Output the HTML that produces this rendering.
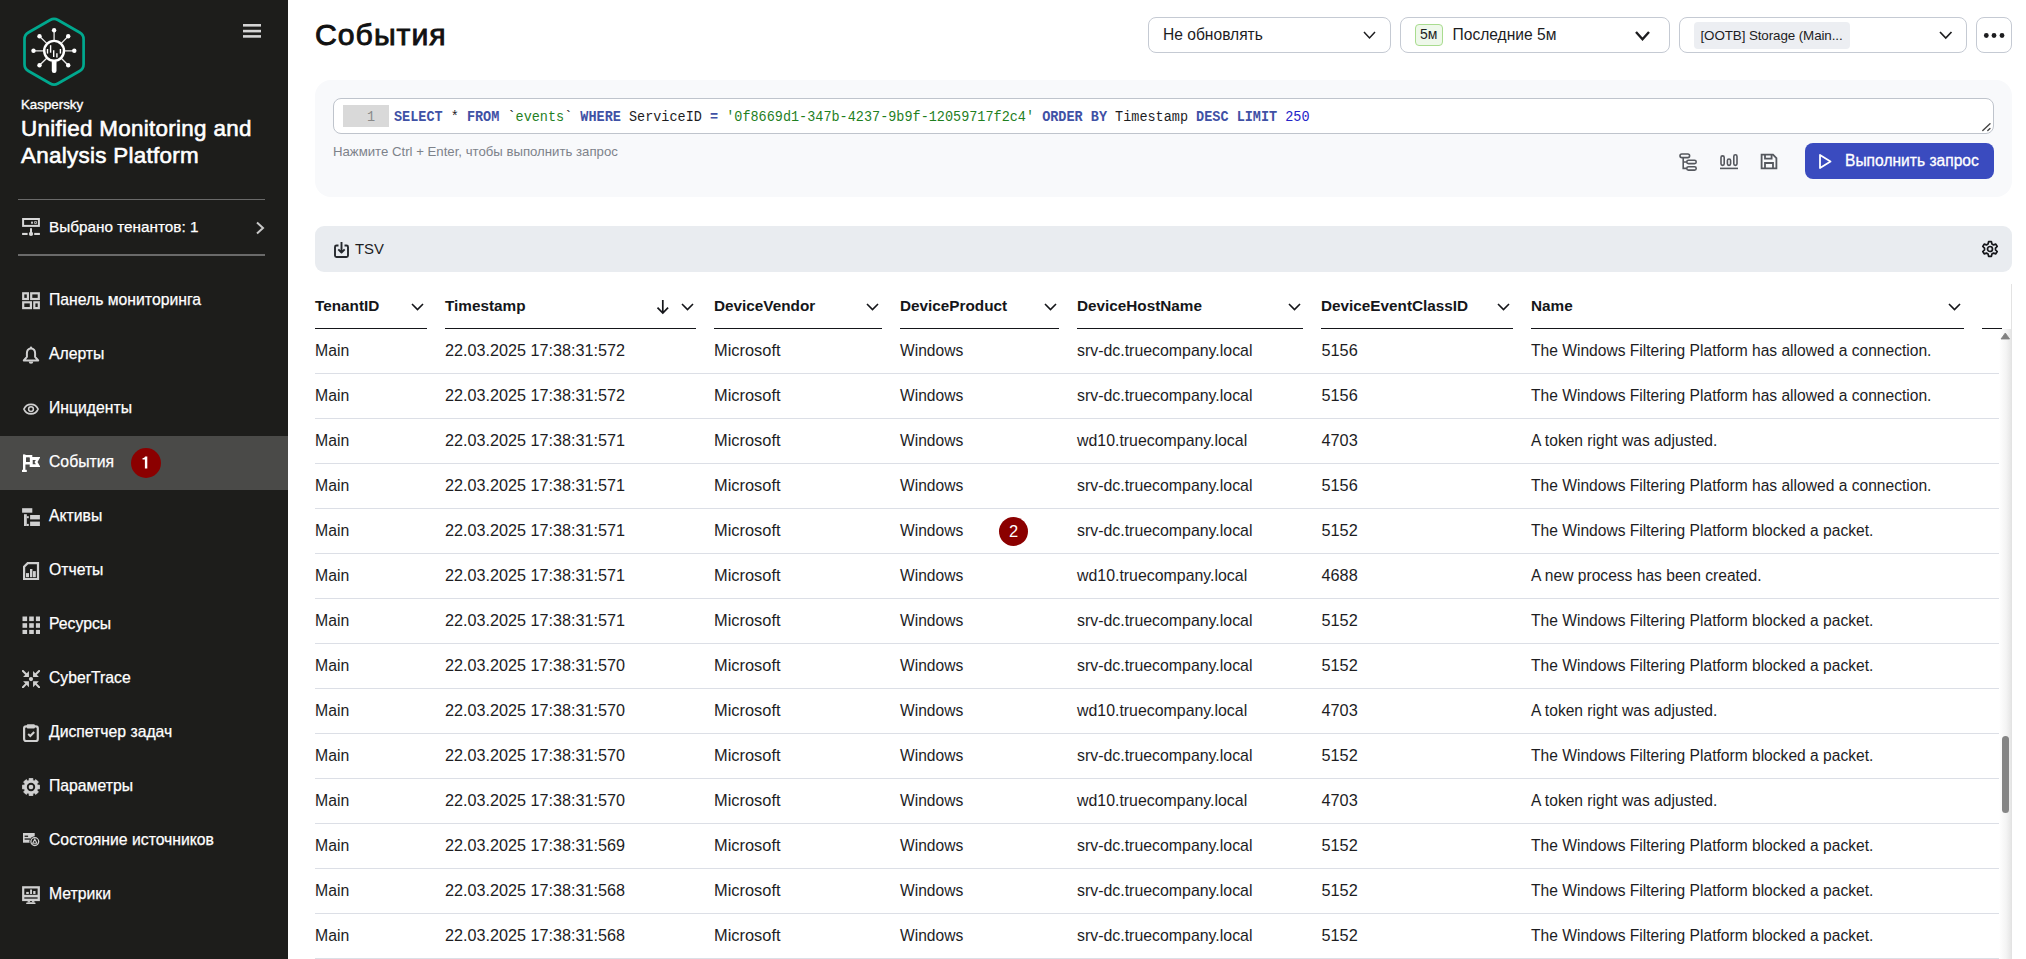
<!DOCTYPE html>
<html><head><meta charset="utf-8">
<style>
*{box-sizing:border-box;margin:0;padding:0}
html,body{width:2026px;height:959px;overflow:hidden;background:#fff;font-family:"Liberation Sans",sans-serif;color:#1d1d1f}
.abs{position:absolute}
#side{position:absolute;left:0;top:0;width:288px;height:959px;background:#1d1d1b;color:#fff}
.nav{position:absolute;left:0;width:288px;height:54px}
.nav.sel{background:#4a4a48}
.nav svg{position:absolute;left:21px;top:18px}
.nav .t{position:absolute;left:49px;top:0;line-height:54px;font-size:15.6px;white-space:nowrap;color:#fff}
.badge{position:absolute;width:30px;height:30px;border-radius:50%;background:#8b0000;color:#fff;font-size:16px;line-height:30px;text-align:center;font-weight:bold}
.dd{position:absolute;top:17px;height:36px;border:1px solid #c5cad3;border-radius:8px;background:#fff}
.hdr{position:absolute;top:290px;height:39px;border-bottom:1px solid #15161a}
.hdr .t{position:absolute;left:0;top:0;font-weight:bold;font-size:15.3px;line-height:30px;white-space:nowrap}
.hdr svg{position:absolute;top:13px}
.row{position:absolute;left:315px;width:1684px;height:45px;border-bottom:1px solid #dcdfe6}
.row span{position:absolute;top:0;line-height:44px;font-size:16px;white-space:nowrap;color:#1d1d1f}
.mono{font-family:"Liberation Mono",monospace}
</style></head><body>
<div id="side">
<svg class="abs" style="left:0;top:0" width="110" height="90" viewBox="0 0 110 90">
<path d="M50.15 19.99 Q54.05 17.75 57.95 19.99 L79.70 32.51 Q83.6 34.75 83.60 39.25 L83.60 64.25 Q83.6 68.75 79.70 70.99 L57.95 83.51 Q54.05 85.75 50.15 83.51 L28.40 70.99 Q24.5 68.75 24.50 64.25 L24.50 39.25 Q24.5 34.75 28.40 32.51 Z" fill="none" stroke="#00a88e" stroke-width="2.7"/>
<g stroke="#e8e8e8" stroke-width="1.3" stroke-linecap="round">
<line x1="54.1" y1="30.2" x2="54.1" y2="41"/>
<line x1="39.5" y1="36.3" x2="47" y2="43.6"/>
<line x1="68.2" y1="36.3" x2="61" y2="43.6"/>
<line x1="33.5" y1="50.8" x2="44.3" y2="50.8"/>
<line x1="74.3" y1="50.8" x2="64" y2="50.8"/>
<line x1="39.5" y1="65.3" x2="47" y2="58"/>
<line x1="68.2" y1="65.3" x2="61" y2="58"/>
</g>
<g fill="#fff">
<circle cx="54.1" cy="30.2" r="2.2"/><circle cx="39.5" cy="36.3" r="2.2"/><circle cx="68.2" cy="36.3" r="2.2"/>
<circle cx="33.5" cy="50.8" r="2.2"/><circle cx="74.3" cy="50.8" r="2.2"/><circle cx="39.5" cy="65.3" r="2.2"/><circle cx="68.2" cy="65.3" r="2.2"/>
<rect x="51.8" y="60" width="4.7" height="12.9" rx="2.2"/>
</g>
<circle cx="54.1" cy="50.8" r="9.9" fill="#1d1d1b" stroke="#fff" stroke-width="2.4"/>
<g stroke="#fff" stroke-width="1.4">
<line x1="47.5" y1="49" x2="47.5" y2="53.6"/><line x1="50.6" y1="45.2" x2="50.6" y2="52.7"/>
<line x1="53.7" y1="50.3" x2="53.7" y2="56.9"/><line x1="56.9" y1="53.2" x2="56.9" y2="57.4"/>
<line x1="60.4" y1="49" x2="60.4" y2="53.6"/>
</g>
</svg>
<svg class="abs" style="left:243px;top:22px" width="18" height="18"><g fill="#d4d4d4"><rect x="0" y="2" width="18" height="2.6"/><rect x="0" y="7.8" width="18" height="2.6"/><rect x="0" y="13.1" width="18" height="2.6"/></g></svg>
<div class="abs" style="left:21px;top:96.98px;font-size:13.3px;line-height:16.62px;font-weight:normal;white-space:nowrap;color:#fff;-webkit-text-stroke:0.35px #fff;">Kaspersky</div>
<div class="abs" style="left:21px;top:115.14px;font-size:22.4px;line-height:28.0px;font-weight:normal;white-space:nowrap;color:#fff;-webkit-text-stroke:0.6px #fff;letter-spacing:0.3px;">Unified Monitoring and</div>
<div class="abs" style="left:21px;top:142.04px;font-size:22.4px;line-height:28.0px;font-weight:normal;white-space:nowrap;color:#fff;-webkit-text-stroke:0.6px #fff;letter-spacing:0.3px;">Analysis Platform</div>
<div class="abs" style="left:18px;top:199px;width:247px;height:1px;background:#6a6a6a"></div>
<div class="abs" style="left:18px;top:254px;width:247px;height:2px;background:#6a6a6a"></div>
<svg class="abs" style="left:22px;top:218px" width="18" height="18" viewBox="0 0 18 18">
<rect x="1.1" y="1" width="15.8" height="6.9" fill="none" stroke="#d8d8d8" stroke-width="2"/>
<rect x="9.1" y="3.6" width="1.8" height="2.1" fill="#d8d8d8"/>
<rect x="12.1" y="3.2" width="2.9" height="2.9" fill="#bdbdbd"/>
<path d="M12.6 3.7 L14.5 5.6 M14.5 3.7 L12.6 5.6" stroke="#1d1d1b" stroke-width="0.6"/>
<rect x="8" y="10.2" width="2" height="5" fill="#d8d8d8"/>
<circle cx="9" cy="15.9" r="2.1" fill="#d8d8d8"/>
<rect x="0.1" y="14.9" width="5.5" height="2.1" fill="#d8d8d8"/><rect x="12.2" y="14.9" width="5.7" height="2.1" fill="#d8d8d8"/>
</svg>
<div class="abs" style="left:49px;top:216.84px;font-size:15.3px;line-height:19.12px;font-weight:normal;white-space:nowrap;color:#fff;-webkit-text-stroke:0.25px #fff;">Выбрано тенантов: 1</div>
<svg class="abs" style="left:254px;top:220px" width="12" height="16"><path d="M3 2.5 L9 8 L3 13.5" fill="none" stroke="#c8c8c8" stroke-width="2"/></svg>
<div class="nav" style="top:274px"><svg width="18" height="18" viewBox="0 0 18 18" style="left:22px;top:17.8px"><g fill="none" stroke="#d0d0d0" stroke-width="2.2"><rect x="1.2" y="1.3" width="4.7" height="5.7"/><rect x="9.2" y="1.3" width="7.6" height="5.7"/><rect x="1.2" y="10.3" width="7.7" height="5.8"/><rect x="12.3" y="10.3" width="4.5" height="5.8"/></g></svg></div>
<div class="abs" style="left:49px;top:290.00px;font-size:15.75px;line-height:19.69px;font-weight:normal;white-space:nowrap;color:#fff;-webkit-text-stroke:0.25px #fff;">Панель мониторинга</div>
<div class="nav" style="top:328px"><svg width="18" height="18" viewBox="0 0 18 18" style="left:22px;top:17.8px"><path d="M9 2.4 C6.1 2.4 4.9 4.6 4.9 7.2 L4.9 10.9 L1.8 14.5 L16.2 14.5 L13.1 10.9 L13.1 7.2 C13.1 4.6 11.9 2.4 9 2.4 Z" fill="none" stroke="#d0d0d0" stroke-width="2" stroke-linejoin="round"/><circle cx="9" cy="1.7" r="1.2" fill="#d0d0d0"/><path d="M6.7 15.4 A2.3 2.3 0 0 0 11.3 15.4 Z" fill="#d0d0d0"/></svg></div>
<div class="abs" style="left:49px;top:344.00px;font-size:15.75px;line-height:19.69px;font-weight:normal;white-space:nowrap;color:#fff;-webkit-text-stroke:0.25px #fff;">Алерты</div>
<div class="nav" style="top:382px"><svg width="18" height="18" viewBox="0 0 18 18" style="left:22px;top:17.8px"><path d="M1.9 9.1 C4.6 2.8 13.4 2.8 16.1 9.1 C13.4 15.4 4.6 15.4 1.9 9.1 Z" fill="none" stroke="#d0d0d0" stroke-width="1.6" stroke-linejoin="round"/><circle cx="9" cy="9.1" r="2.4" fill="none" stroke="#d0d0d0" stroke-width="1.5"/></svg></div>
<div class="abs" style="left:49px;top:398.00px;font-size:15.75px;line-height:19.69px;font-weight:normal;white-space:nowrap;color:#fff;-webkit-text-stroke:0.25px #fff;">Инциденты</div>
<div class="nav sel" style="top:436px"><svg width="18" height="18" viewBox="0 0 18 18" style="left:22px;top:17.8px"><rect x="1" y="0.4" width="2.4" height="17" fill="#fff"/><rect x="0" y="15.8" width="4.8" height="2.4" fill="#fff"/><path fill-rule="evenodd" d="M3 0.9 H10.3 V10.5 H3 Z M4.1 3.6 H7.7 V8.0 H4.1 Z" fill="#fff"/><path fill-rule="evenodd" d="M7.7 3.0 H18.4 L15.5 8.1 L18.4 13.0 H7.7 Z M10.6 6.0 H13.9 L12.5 8.1 L13.9 10.3 H10.6 Z" fill="#fff"/><rect x="4.1" y="3.6" width="3.6" height="4.4" fill="#4a4a48"/></svg></div>
<div class="abs" style="left:49px;top:452.00px;font-size:15.75px;line-height:19.69px;font-weight:normal;white-space:nowrap;color:#fff;-webkit-text-stroke:0.25px #fff;">События</div>
<div class="nav" style="top:490px"><svg width="18" height="18" viewBox="0 0 18 18" style="left:22px;top:17.8px"><rect x="0.1" y="0.2" width="10.2" height="4.5" fill="#d0d0d0"/><rect x="2" y="6.2" width="2.8" height="12" fill="#d0d0d0"/><rect x="4.8" y="8.2" width="2" height="2" fill="#d0d0d0"/><rect x="4.8" y="15.9" width="2" height="2.3" fill="#d0d0d0"/><rect x="8.1" y="7" width="9.8" height="4.4" fill="#d0d0d0"/><rect x="8.1" y="13.6" width="9.8" height="4.6" fill="#d0d0d0"/></svg></div>
<div class="abs" style="left:49px;top:506.00px;font-size:15.75px;line-height:19.69px;font-weight:normal;white-space:nowrap;color:#fff;-webkit-text-stroke:0.25px #fff;">Активы</div>
<div class="nav" style="top:544px"><svg width="18" height="18" viewBox="0 0 18 18" style="left:22px;top:17.8px"><path d="M5.7 1.2 L16 1.2 L16 17.1 L2.1 17.1 L2.1 4.8 Z" fill="none" stroke="#d0d0d0" stroke-width="2.2" stroke-linejoin="miter"/><rect x="4" y="11.1" width="3" height="4.1" fill="#d0d0d0"/><rect x="8" y="7" width="2.4" height="8.2" fill="#d0d0d0"/><rect x="11" y="9.1" width="2.8" height="6.1" fill="#d0d0d0"/></svg></div>
<div class="abs" style="left:49px;top:560.00px;font-size:15.75px;line-height:19.69px;font-weight:normal;white-space:nowrap;color:#fff;-webkit-text-stroke:0.25px #fff;">Отчеты</div>
<div class="nav" style="top:598px"><svg width="18" height="18" viewBox="0 0 18 18" style="left:22px;top:17.8px"><rect x="0.5" y="0.5" width="4.6" height="4.6" fill="#d0d0d0"/><rect x="0.5" y="7.2" width="4.6" height="4.6" fill="#d0d0d0"/><rect x="0.5" y="13.9" width="4.6" height="4.6" fill="#d0d0d0"/><rect x="7.2" y="0.5" width="4.6" height="4.6" fill="#d0d0d0"/><rect x="7.2" y="7.2" width="4.6" height="4.6" fill="#d0d0d0"/><rect x="7.2" y="13.9" width="4.6" height="4.6" fill="#d0d0d0"/><rect x="13.9" y="0.5" width="4.6" height="4.6" fill="#d0d0d0"/><rect x="13.9" y="7.2" width="4.6" height="4.6" fill="#d0d0d0"/><rect x="13.9" y="13.9" width="4.6" height="4.6" fill="#d0d0d0"/></svg></div>
<div class="abs" style="left:49px;top:614.00px;font-size:15.75px;line-height:19.69px;font-weight:normal;white-space:nowrap;color:#fff;-webkit-text-stroke:0.25px #fff;">Ресурсы</div>
<div class="nav" style="top:652px"><svg width="18" height="18" viewBox="0 0 18 18" style="left:22px;top:17.8px"><path d="M1.10 7.05 L6.95 7.05 L6.95 1.06 Z" fill="#d0d0d0"/><path d="M0.90 1.00 L5.20 5.30" stroke="#d0d0d0" stroke-width="2" stroke-linecap="round"/><path d="M16.90 7.05 L11.05 7.05 L11.05 1.06 Z" fill="#d0d0d0"/><path d="M17.10 1.00 L12.80 5.30" stroke="#d0d0d0" stroke-width="2" stroke-linecap="round"/><path d="M1.10 11.15 L6.95 11.15 L6.95 17.14 Z" fill="#d0d0d0"/><path d="M0.90 17.20 L5.20 12.90" stroke="#d0d0d0" stroke-width="2" stroke-linecap="round"/><path d="M16.90 11.15 L11.05 11.15 L11.05 17.14 Z" fill="#d0d0d0"/><path d="M17.10 17.20 L12.80 12.90" stroke="#d0d0d0" stroke-width="2" stroke-linecap="round"/><circle cx="9" cy="9.1" r="2.1" fill="#d0d0d0"/></svg></div>
<div class="abs" style="left:49px;top:668.00px;font-size:15.75px;line-height:19.69px;font-weight:normal;white-space:nowrap;color:#fff;-webkit-text-stroke:0.25px #fff;">CyberTrace</div>
<div class="nav" style="top:706px"><svg width="18" height="18" viewBox="0 0 18 18" style="left:22px;top:17.8px"><rect x="2.1" y="2.3" width="13.7" height="14.8" rx="2" fill="none" stroke="#d0d0d0" stroke-width="2.2"/><rect x="4.8" y="0.3" width="8.1" height="4.1" rx="1" fill="#d0d0d0"/><path d="M6.2 10 L8.3 12 L12.2 8" fill="none" stroke="#d0d0d0" stroke-width="2"/></svg></div>
<div class="abs" style="left:49px;top:722.00px;font-size:15.75px;line-height:19.69px;font-weight:normal;white-space:nowrap;color:#fff;-webkit-text-stroke:0.25px #fff;">Диспетчер задач</div>
<div class="nav" style="top:760px"><svg width="18" height="18" viewBox="0 0 18 18" style="left:22px;top:17.8px"><path d="M7.05 2.69 L7.23 0.28 L10.77 0.28 L10.95 2.69 L12.08 3.16 L13.92 1.58 L16.42 4.08 L14.84 5.92 L15.31 7.05 L17.72 7.23 L17.72 10.77 L15.31 10.95 L14.84 12.08 L16.42 13.92 L13.92 16.42 L12.08 14.84 L10.95 15.31 L10.77 17.72 L7.23 17.72 L7.05 15.31 L5.92 14.84 L4.08 16.42 L1.58 13.92 L3.16 12.08 L2.69 10.95 L0.28 10.77 L0.28 7.23 L2.69 7.05 L3.16 5.92 L1.58 4.08 L4.08 1.58 L5.92 3.16 Z" fill="#d0d0d0" stroke="#d0d0d0" stroke-width="0.8" stroke-linejoin="round"/><circle cx="9" cy="9" r="6.7" fill="#d0d0d0"/><circle cx="9" cy="9" r="4.2" fill="#1d1d1b"/><circle cx="9" cy="9" r="2.3" fill="#d0d0d0"/></svg></div>
<div class="abs" style="left:49px;top:776.00px;font-size:15.75px;line-height:19.69px;font-weight:normal;white-space:nowrap;color:#fff;-webkit-text-stroke:0.25px #fff;">Параметры</div>
<div class="nav" style="top:814px"><svg width="18" height="18" viewBox="0 0 18 18" style="left:22px;top:17.8px"><rect x="1" y="1" width="11.7" height="9.7" fill="#d0d0d0"/><rect x="2.6" y="3.6" width="3.5" height="1.3" fill="#1d1d1b"/><rect x="2.6" y="6.4" width="5.5" height="1.3" fill="#1d1d1b"/><circle cx="12.8" cy="9.6" r="5.4" fill="#1d1d1b"/><circle cx="12.8" cy="9.6" r="3.9" fill="none" stroke="#d0d0d0" stroke-width="1.3"/><path d="M12.8 7.2 L14.9 11.2 L10.7 11.2 Z" fill="none" stroke="#d0d0d0" stroke-width="1.1"/></svg></div>
<div class="abs" style="left:49px;top:830.00px;font-size:15.75px;line-height:19.69px;font-weight:normal;white-space:nowrap;color:#fff;-webkit-text-stroke:0.25px #fff;">Состояние источников</div>
<div class="nav" style="top:868px"><svg width="18" height="18" viewBox="0 0 18 18" style="left:22px;top:17.8px"><rect x="0.1" y="0.2" width="17.8" height="14.9" fill="#d0d0d0"/><rect x="2.3" y="2.5" width="13.3" height="6.3" fill="#1d1d1b"/><rect x="2.3" y="11.1" width="13.3" height="1.8" fill="#4a4a4a"/><rect x="4.2" y="5.9" width="2.6" height="2.1" fill="#d0d0d0"/><rect x="8.1" y="3.5" width="1.9" height="4.5" fill="#d0d0d0"/><rect x="11.2" y="5" width="2.3" height="3" fill="#d0d0d0"/><rect x="5.6" y="15.1" width="6.8" height="1.5" fill="#d0d0d0"/><rect x="8" y="15.1" width="2" height="0.9" fill="#1d1d1b"/><rect x="4.2" y="16.4" width="9.3" height="1.8" rx="0.6" fill="#d0d0d0"/></svg></div>
<div class="abs" style="left:49px;top:884.00px;font-size:15.75px;line-height:19.69px;font-weight:normal;white-space:nowrap;color:#fff;-webkit-text-stroke:0.25px #fff;">Метрики</div>
<div class="badge" style="left:130.6px;top:447.6px"><svg class="abs" style="left:0;top:0" width="30" height="30"><path d="M14.1 8.4 L16.3 8.4 L16.3 20.6 L13.9 20.6 L13.9 11.4 L11.5 11.4 L11.5 10.2 Q13.6 10.1 14.1 8.4 Z" fill="#fff"/></svg></div>
</div>
<div class="abs" style="left:315px;top:16.16px;font-size:30.2px;line-height:37.75px;font-weight:normal;white-space:nowrap;color:#111;-webkit-text-stroke:0.9px #111;letter-spacing:1px;">События</div>
<div class="dd" style="left:1148px;width:243px"></div>
<div class="abs" style="left:1163px;top:24.54px;font-size:15.6px;line-height:19.5px;font-weight:normal;white-space:nowrap;color:#1d1d1f;">Не обновлять</div>
<svg class="abs" style="left:1361.5px;top:30px" width="15" height="10"><path d="M2 2 L7.5 8 L13 2" fill="none" stroke="#1d1d1f" stroke-width="1.5"/></svg>
<div class="dd" style="left:1400px;width:270px"></div>
<div class="abs" style="left:1415px;top:24px;width:28px;height:22px;border:1px solid #a9dc8f;background:#eef8ea;border-radius:4px"></div>
<div class="abs" style="left:1420px;top:26.40px;font-size:14px;line-height:17.5px;font-weight:normal;white-space:nowrap;color:#1d1d1f;">5м</div>
<div class="abs" style="left:1452.5px;top:24.84px;font-size:15.6px;line-height:19.5px;font-weight:normal;white-space:nowrap;color:#1d1d1f;">Последние 5м</div>
<svg class="abs" style="left:1634px;top:30px" width="17" height="11.2"><path d="M2 2 L8.5 9.2 L15 2" fill="none" stroke="#1d1d1f" stroke-width="2.4"/></svg>
<div class="dd" style="left:1679px;width:288px"></div>
<div class="abs" style="left:1694px;top:22px;width:156px;height:27px;background:#eceef2;border-radius:4px"></div>
<div class="abs" style="left:1700.5px;top:27.58px;font-size:13.4px;line-height:16.75px;font-weight:normal;white-space:nowrap;color:#1d1d1f;letter-spacing:-0.1px;">[OOTB] Storage (Main...</div>
<svg class="abs" style="left:1937.5px;top:30px" width="15.5" height="10"><path d="M2 2 L7.75 8 L13.5 2" fill="none" stroke="#1d1d1f" stroke-width="1.7"/></svg>
<div class="dd" style="left:1976px;width:36px"></div>
<svg class="abs" style="left:1980px;top:30px" width="28" height="12"><g fill="#1d1d1f"><circle cx="6.3" cy="5.5" r="2.4"/><circle cx="14" cy="5.5" r="2.4"/><circle cx="22" cy="5.5" r="2.4"/></g></svg>
<div class="abs" style="left:315px;top:80px;width:1697px;height:117px;background:#f8f9fb;border-radius:16px"></div>
<div class="abs" style="left:333px;top:98px;width:1661px;height:36px;background:#fff;border:1px solid #bfc4cc;border-radius:8px"></div>
<div class="abs" style="left:343px;top:105px;width:46px;height:22px;background:#d9d9d9"></div>
<div class="abs" style="left:367px;top:109.88px;font-size:13.5px;line-height:16.88px;font-weight:normal;white-space:nowrap;color:#8a8a8a;font-family:'Liberation Mono',monospace;transform:scaleY(1.1);transform-origin:0 12px;">1</div>
<div class="abs" style="left:394px;top:109.88px;font-size:13.5px;line-height:16.88px;font-weight:normal;white-space:nowrap;color:#1d1d1f;font-family:'Liberation Mono',monospace;white-space:pre;transform:scaleY(1.1);transform-origin:0 12px;"><b style="color:#3f51a5">SELECT</b> * <b style="color:#3f51a5">FROM</b> `<span style="color:#1f7f1f">events</span>` <b style="color:#3f51a5">WHERE</b> ServiceID <b style="color:#3f51a5">=</b> <span style="color:#1f7f1f">'0f8669d1-347b-4237-9b9f-12059717f2c4'</span> <b style="color:#3f51a5">ORDER BY</b> Timestamp <b style="color:#3f51a5">DESC</b> <b style="color:#3f51a5">LIMIT</b> <span style="color:#2424c8">250</span></div>
<svg class="abs" style="left:1981px;top:121px" width="11" height="11"><path d="M1.8 9.6 L9 2.7 M6.8 9.6 L9 7.6" stroke="#444" stroke-width="1.4" stroke-linecap="round"/></svg>
<div class="abs" style="left:333px;top:143.68px;font-size:13.2px;line-height:16.5px;font-weight:normal;white-space:nowrap;color:#7d828a;">Нажмите Ctrl + Enter, чтобы выполнить запрос</div>
<svg class="abs" style="left:1678px;top:152px" width="20" height="20" viewBox="0 0 20 20"><g fill="none" stroke="#55585e" stroke-width="1.6">
<rect x="2" y="2" width="9.6" height="3.6" rx="1.8"/><rect x="8.8" y="8.3" width="9.4" height="3.3" rx="1.65"/><rect x="8.8" y="14.8" width="9.4" height="3.3" rx="1.65"/>
<path d="M5.2 5.6 L5.2 16.4 L8.8 16.4 M5.2 10 L8.8 10"/></g></svg>
<svg class="abs" style="left:1719px;top:152px" width="20" height="20" viewBox="0 0 20 20"><g fill="none" stroke="#55585e" stroke-width="1.6">
<rect x="2" y="3.9" width="3.2" height="9.5" rx="1.6"/><rect x="8.4" y="7" width="3.2" height="6.4" rx="1.6"/><rect x="14.8" y="2.8" width="3.2" height="10.6" rx="1.6"/>
<path d="M1 16.4 L19 16.4"/></g></svg>
<svg class="abs" style="left:1759px;top:152px" width="20" height="20" viewBox="0 0 20 20"><g fill="none" stroke="#55585e" stroke-width="1.8">
<path d="M2.6 2.6 L14 2.6 L17.4 6 L17.4 16.4 L2.6 16.4 Z"/><path d="M6 2.6 L6 6.6 L12.6 6.6 L12.6 2.6"/><path d="M6 16.4 L6 11 L14 11 L14 16.4"/></g></svg>
<div class="abs" style="left:1805px;top:143px;width:189px;height:36px;background:#3a4bbf;border-radius:8px"></div>
<svg class="abs" style="left:1817px;top:153px" width="16" height="17"><path d="M3 2 L13.5 8.5 L3 15 Z" fill="none" stroke="#fff" stroke-width="1.8" stroke-linejoin="round"/></svg>
<div class="abs" style="left:1845px;top:150.84px;font-size:15.6px;line-height:19.5px;font-weight:normal;white-space:nowrap;color:#fff;-webkit-text-stroke:0.3px #fff;">Выполнить запрос</div>
<div class="abs" style="left:315px;top:226px;width:1697px;height:46px;background:#e9ecf0;border-radius:9px"></div>
<svg class="abs" style="left:333px;top:241px" width="18" height="18" viewBox="0 0 18 18"><g fill="none" stroke="#25282d" stroke-width="1.9" stroke-linejoin="round">
<path d="M5.5 4.5 L3.5 4.5 Q2 4.5 2 6 L2 14.5 Q2 16 3.5 16 L13.5 16 Q15 16 15 14.5 L15 6 Q15 4.5 13.5 4.5 L11.5 4.5"/><path d="M8.5 1 L8.5 11.5 M5.3 8.3 L8.5 11.5 L11.7 8.3"/></g></svg>
<div class="abs" style="left:355px;top:240.33px;font-size:14.9px;line-height:18.62px;font-weight:normal;white-space:nowrap;color:#1d1d1f;">TSV</div>
<svg class="abs" style="left:1981px;top:240px" width="18" height="18" viewBox="0 0 18 18"><path d="M7.6 1.6 L10.4 1.6 L10.9 3.9 L12.6 4.9 L14.8 4.1 L16.2 6.5 L14.5 8.1 L14.5 9.9 L16.2 11.5 L14.8 13.9 L12.6 13.1 L10.9 14.1 L10.4 16.4 L7.6 16.4 L7.1 14.1 L5.4 13.1 L3.2 13.9 L1.8 11.5 L3.5 9.9 L3.5 8.1 L1.8 6.5 L3.2 4.1 L5.4 4.9 L7.1 3.9 Z" fill="none" stroke="#15161a" stroke-width="1.7" stroke-linejoin="round"/><circle cx="9" cy="9" r="2.5" fill="none" stroke="#15161a" stroke-width="1.7"/></svg>
<div class="abs" style="left:315px;top:295.84px;font-size:15.3px;line-height:19.12px;font-weight:bold;white-space:nowrap;color:#15161a;">TenantID</div>
<div class="abs" style="left:315px;top:328px;width:112px;height:1px;background:#15161a"></div>
<svg class="abs" style="left:411px;top:302px" width="14" height="10"><path d="M1 2 L6.5 7.6 L12 2" fill="none" stroke="#15161a" stroke-width="1.6"/></svg>
<div class="abs" style="left:445px;top:295.84px;font-size:15.3px;line-height:19.12px;font-weight:bold;white-space:nowrap;color:#15161a;">Timestamp</div>
<div class="abs" style="left:445px;top:328px;width:251px;height:1px;background:#15161a"></div>
<svg class="abs" style="left:680.5px;top:302px" width="14" height="10"><path d="M1 2 L6.5 7.6 L12 2" fill="none" stroke="#15161a" stroke-width="1.6"/></svg>
<div class="abs" style="left:714px;top:295.84px;font-size:15.3px;line-height:19.12px;font-weight:bold;white-space:nowrap;color:#15161a;">DeviceVendor</div>
<div class="abs" style="left:714px;top:328px;width:168px;height:1px;background:#15161a"></div>
<svg class="abs" style="left:866.3px;top:302px" width="14" height="10"><path d="M1 2 L6.5 7.6 L12 2" fill="none" stroke="#15161a" stroke-width="1.6"/></svg>
<div class="abs" style="left:900px;top:295.84px;font-size:15.3px;line-height:19.12px;font-weight:bold;white-space:nowrap;color:#15161a;">DeviceProduct</div>
<div class="abs" style="left:900px;top:328px;width:159px;height:1px;background:#15161a"></div>
<svg class="abs" style="left:1044px;top:302px" width="14" height="10"><path d="M1 2 L6.5 7.6 L12 2" fill="none" stroke="#15161a" stroke-width="1.6"/></svg>
<div class="abs" style="left:1077px;top:295.84px;font-size:15.3px;line-height:19.12px;font-weight:bold;white-space:nowrap;color:#15161a;">DeviceHostName</div>
<div class="abs" style="left:1077px;top:328px;width:226px;height:1px;background:#15161a"></div>
<svg class="abs" style="left:1287.6px;top:302px" width="14" height="10"><path d="M1 2 L6.5 7.6 L12 2" fill="none" stroke="#15161a" stroke-width="1.6"/></svg>
<div class="abs" style="left:1321px;top:295.84px;font-size:15.3px;line-height:19.12px;font-weight:bold;white-space:nowrap;color:#15161a;">DeviceEventClassID</div>
<div class="abs" style="left:1321px;top:328px;width:192px;height:1px;background:#15161a"></div>
<svg class="abs" style="left:1497.4px;top:302px" width="14" height="10"><path d="M1 2 L6.5 7.6 L12 2" fill="none" stroke="#15161a" stroke-width="1.6"/></svg>
<div class="abs" style="left:1531px;top:295.84px;font-size:15.3px;line-height:19.12px;font-weight:bold;white-space:nowrap;color:#15161a;">Name</div>
<div class="abs" style="left:1531px;top:328px;width:433px;height:1px;background:#15161a"></div>
<svg class="abs" style="left:1948px;top:302px" width="14" height="10"><path d="M1 2 L6.5 7.6 L12 2" fill="none" stroke="#15161a" stroke-width="1.6"/></svg>
<div class="abs" style="left:1982px;top:328px;width:20px;height:1px;background:#15161a"></div>
<svg class="abs" style="left:655px;top:299px" width="16" height="16"><path d="M7.8 1 L7.8 14 M2.5 8.6 L7.8 14 L13.1 8.6" fill="none" stroke="#15161a" stroke-width="1.7"/></svg>
<div class="abs" style="left:315px;top:373px;width:1684px;height:1px;background:#dcdfe6"></div>
<div class="abs" style="left:315px;top:340.65px;font-size:15.8px;line-height:19.75px;font-weight:normal;white-space:nowrap;">Main</div>
<div class="abs" style="left:445px;top:340.26px;font-size:16.2px;line-height:20.25px;font-weight:normal;white-space:nowrap;">22.03.2025 17:38:31:572</div>
<div class="abs" style="left:714px;top:340.07px;font-size:16.4px;line-height:20.5px;font-weight:normal;white-space:nowrap;">Microsoft</div>
<div class="abs" style="left:900px;top:340.84px;font-size:15.6px;line-height:19.5px;font-weight:normal;white-space:nowrap;">Windows</div>
<div class="abs" style="left:1077px;top:340.55px;font-size:15.9px;line-height:19.88px;font-weight:normal;white-space:nowrap;">srv-dc.truecompany.local</div>
<div class="abs" style="left:1321.5px;top:340.16px;font-size:16.3px;line-height:20.38px;font-weight:normal;white-space:nowrap;">5156</div>
<div class="abs" style="left:1531px;top:340.84px;font-size:15.6px;line-height:19.5px;font-weight:normal;white-space:nowrap;">The Windows Filtering Platform has allowed a connection.</div>
<div class="abs" style="left:315px;top:418px;width:1684px;height:1px;background:#dcdfe6"></div>
<div class="abs" style="left:315px;top:385.65px;font-size:15.8px;line-height:19.75px;font-weight:normal;white-space:nowrap;">Main</div>
<div class="abs" style="left:445px;top:385.26px;font-size:16.2px;line-height:20.25px;font-weight:normal;white-space:nowrap;">22.03.2025 17:38:31:572</div>
<div class="abs" style="left:714px;top:385.07px;font-size:16.4px;line-height:20.5px;font-weight:normal;white-space:nowrap;">Microsoft</div>
<div class="abs" style="left:900px;top:385.84px;font-size:15.6px;line-height:19.5px;font-weight:normal;white-space:nowrap;">Windows</div>
<div class="abs" style="left:1077px;top:385.55px;font-size:15.9px;line-height:19.88px;font-weight:normal;white-space:nowrap;">srv-dc.truecompany.local</div>
<div class="abs" style="left:1321.5px;top:385.16px;font-size:16.3px;line-height:20.38px;font-weight:normal;white-space:nowrap;">5156</div>
<div class="abs" style="left:1531px;top:385.84px;font-size:15.6px;line-height:19.5px;font-weight:normal;white-space:nowrap;">The Windows Filtering Platform has allowed a connection.</div>
<div class="abs" style="left:315px;top:463px;width:1684px;height:1px;background:#dcdfe6"></div>
<div class="abs" style="left:315px;top:430.65px;font-size:15.8px;line-height:19.75px;font-weight:normal;white-space:nowrap;">Main</div>
<div class="abs" style="left:445px;top:430.26px;font-size:16.2px;line-height:20.25px;font-weight:normal;white-space:nowrap;">22.03.2025 17:38:31:571</div>
<div class="abs" style="left:714px;top:430.07px;font-size:16.4px;line-height:20.5px;font-weight:normal;white-space:nowrap;">Microsoft</div>
<div class="abs" style="left:900px;top:430.84px;font-size:15.6px;line-height:19.5px;font-weight:normal;white-space:nowrap;">Windows</div>
<div class="abs" style="left:1077px;top:430.55px;font-size:15.9px;line-height:19.88px;font-weight:normal;white-space:nowrap;">wd10.truecompany.local</div>
<div class="abs" style="left:1321.5px;top:430.16px;font-size:16.3px;line-height:20.38px;font-weight:normal;white-space:nowrap;">4703</div>
<div class="abs" style="left:1531px;top:430.84px;font-size:15.6px;line-height:19.5px;font-weight:normal;white-space:nowrap;">A token right was adjusted.</div>
<div class="abs" style="left:315px;top:508px;width:1684px;height:1px;background:#dcdfe6"></div>
<div class="abs" style="left:315px;top:475.65px;font-size:15.8px;line-height:19.75px;font-weight:normal;white-space:nowrap;">Main</div>
<div class="abs" style="left:445px;top:475.26px;font-size:16.2px;line-height:20.25px;font-weight:normal;white-space:nowrap;">22.03.2025 17:38:31:571</div>
<div class="abs" style="left:714px;top:475.07px;font-size:16.4px;line-height:20.5px;font-weight:normal;white-space:nowrap;">Microsoft</div>
<div class="abs" style="left:900px;top:475.84px;font-size:15.6px;line-height:19.5px;font-weight:normal;white-space:nowrap;">Windows</div>
<div class="abs" style="left:1077px;top:475.55px;font-size:15.9px;line-height:19.88px;font-weight:normal;white-space:nowrap;">srv-dc.truecompany.local</div>
<div class="abs" style="left:1321.5px;top:475.16px;font-size:16.3px;line-height:20.38px;font-weight:normal;white-space:nowrap;">5156</div>
<div class="abs" style="left:1531px;top:475.84px;font-size:15.6px;line-height:19.5px;font-weight:normal;white-space:nowrap;">The Windows Filtering Platform has allowed a connection.</div>
<div class="abs" style="left:315px;top:553px;width:1684px;height:1px;background:#dcdfe6"></div>
<div class="abs" style="left:315px;top:520.65px;font-size:15.8px;line-height:19.75px;font-weight:normal;white-space:nowrap;">Main</div>
<div class="abs" style="left:445px;top:520.26px;font-size:16.2px;line-height:20.25px;font-weight:normal;white-space:nowrap;">22.03.2025 17:38:31:571</div>
<div class="abs" style="left:714px;top:520.07px;font-size:16.4px;line-height:20.5px;font-weight:normal;white-space:nowrap;">Microsoft</div>
<div class="abs" style="left:900px;top:520.84px;font-size:15.6px;line-height:19.5px;font-weight:normal;white-space:nowrap;">Windows</div>
<div class="abs" style="left:1077px;top:520.55px;font-size:15.9px;line-height:19.88px;font-weight:normal;white-space:nowrap;">srv-dc.truecompany.local</div>
<div class="abs" style="left:1321.5px;top:520.16px;font-size:16.3px;line-height:20.38px;font-weight:normal;white-space:nowrap;">5152</div>
<div class="abs" style="left:1531px;top:520.84px;font-size:15.6px;line-height:19.5px;font-weight:normal;white-space:nowrap;">The Windows Filtering Platform blocked a packet.</div>
<div class="abs" style="left:315px;top:598px;width:1684px;height:1px;background:#dcdfe6"></div>
<div class="abs" style="left:315px;top:565.65px;font-size:15.8px;line-height:19.75px;font-weight:normal;white-space:nowrap;">Main</div>
<div class="abs" style="left:445px;top:565.26px;font-size:16.2px;line-height:20.25px;font-weight:normal;white-space:nowrap;">22.03.2025 17:38:31:571</div>
<div class="abs" style="left:714px;top:565.07px;font-size:16.4px;line-height:20.5px;font-weight:normal;white-space:nowrap;">Microsoft</div>
<div class="abs" style="left:900px;top:565.84px;font-size:15.6px;line-height:19.5px;font-weight:normal;white-space:nowrap;">Windows</div>
<div class="abs" style="left:1077px;top:565.55px;font-size:15.9px;line-height:19.88px;font-weight:normal;white-space:nowrap;">wd10.truecompany.local</div>
<div class="abs" style="left:1321.5px;top:565.16px;font-size:16.3px;line-height:20.38px;font-weight:normal;white-space:nowrap;">4688</div>
<div class="abs" style="left:1531px;top:565.84px;font-size:15.6px;line-height:19.5px;font-weight:normal;white-space:nowrap;">A new process has been created.</div>
<div class="abs" style="left:315px;top:643px;width:1684px;height:1px;background:#dcdfe6"></div>
<div class="abs" style="left:315px;top:610.65px;font-size:15.8px;line-height:19.75px;font-weight:normal;white-space:nowrap;">Main</div>
<div class="abs" style="left:445px;top:610.26px;font-size:16.2px;line-height:20.25px;font-weight:normal;white-space:nowrap;">22.03.2025 17:38:31:571</div>
<div class="abs" style="left:714px;top:610.07px;font-size:16.4px;line-height:20.5px;font-weight:normal;white-space:nowrap;">Microsoft</div>
<div class="abs" style="left:900px;top:610.84px;font-size:15.6px;line-height:19.5px;font-weight:normal;white-space:nowrap;">Windows</div>
<div class="abs" style="left:1077px;top:610.55px;font-size:15.9px;line-height:19.88px;font-weight:normal;white-space:nowrap;">srv-dc.truecompany.local</div>
<div class="abs" style="left:1321.5px;top:610.16px;font-size:16.3px;line-height:20.38px;font-weight:normal;white-space:nowrap;">5152</div>
<div class="abs" style="left:1531px;top:610.84px;font-size:15.6px;line-height:19.5px;font-weight:normal;white-space:nowrap;">The Windows Filtering Platform blocked a packet.</div>
<div class="abs" style="left:315px;top:688px;width:1684px;height:1px;background:#dcdfe6"></div>
<div class="abs" style="left:315px;top:655.65px;font-size:15.8px;line-height:19.75px;font-weight:normal;white-space:nowrap;">Main</div>
<div class="abs" style="left:445px;top:655.26px;font-size:16.2px;line-height:20.25px;font-weight:normal;white-space:nowrap;">22.03.2025 17:38:31:570</div>
<div class="abs" style="left:714px;top:655.07px;font-size:16.4px;line-height:20.5px;font-weight:normal;white-space:nowrap;">Microsoft</div>
<div class="abs" style="left:900px;top:655.84px;font-size:15.6px;line-height:19.5px;font-weight:normal;white-space:nowrap;">Windows</div>
<div class="abs" style="left:1077px;top:655.55px;font-size:15.9px;line-height:19.88px;font-weight:normal;white-space:nowrap;">srv-dc.truecompany.local</div>
<div class="abs" style="left:1321.5px;top:655.16px;font-size:16.3px;line-height:20.38px;font-weight:normal;white-space:nowrap;">5152</div>
<div class="abs" style="left:1531px;top:655.84px;font-size:15.6px;line-height:19.5px;font-weight:normal;white-space:nowrap;">The Windows Filtering Platform blocked a packet.</div>
<div class="abs" style="left:315px;top:733px;width:1684px;height:1px;background:#dcdfe6"></div>
<div class="abs" style="left:315px;top:700.65px;font-size:15.8px;line-height:19.75px;font-weight:normal;white-space:nowrap;">Main</div>
<div class="abs" style="left:445px;top:700.26px;font-size:16.2px;line-height:20.25px;font-weight:normal;white-space:nowrap;">22.03.2025 17:38:31:570</div>
<div class="abs" style="left:714px;top:700.07px;font-size:16.4px;line-height:20.5px;font-weight:normal;white-space:nowrap;">Microsoft</div>
<div class="abs" style="left:900px;top:700.84px;font-size:15.6px;line-height:19.5px;font-weight:normal;white-space:nowrap;">Windows</div>
<div class="abs" style="left:1077px;top:700.55px;font-size:15.9px;line-height:19.88px;font-weight:normal;white-space:nowrap;">wd10.truecompany.local</div>
<div class="abs" style="left:1321.5px;top:700.16px;font-size:16.3px;line-height:20.38px;font-weight:normal;white-space:nowrap;">4703</div>
<div class="abs" style="left:1531px;top:700.84px;font-size:15.6px;line-height:19.5px;font-weight:normal;white-space:nowrap;">A token right was adjusted.</div>
<div class="abs" style="left:315px;top:778px;width:1684px;height:1px;background:#dcdfe6"></div>
<div class="abs" style="left:315px;top:745.65px;font-size:15.8px;line-height:19.75px;font-weight:normal;white-space:nowrap;">Main</div>
<div class="abs" style="left:445px;top:745.26px;font-size:16.2px;line-height:20.25px;font-weight:normal;white-space:nowrap;">22.03.2025 17:38:31:570</div>
<div class="abs" style="left:714px;top:745.07px;font-size:16.4px;line-height:20.5px;font-weight:normal;white-space:nowrap;">Microsoft</div>
<div class="abs" style="left:900px;top:745.84px;font-size:15.6px;line-height:19.5px;font-weight:normal;white-space:nowrap;">Windows</div>
<div class="abs" style="left:1077px;top:745.55px;font-size:15.9px;line-height:19.88px;font-weight:normal;white-space:nowrap;">srv-dc.truecompany.local</div>
<div class="abs" style="left:1321.5px;top:745.16px;font-size:16.3px;line-height:20.38px;font-weight:normal;white-space:nowrap;">5152</div>
<div class="abs" style="left:1531px;top:745.84px;font-size:15.6px;line-height:19.5px;font-weight:normal;white-space:nowrap;">The Windows Filtering Platform blocked a packet.</div>
<div class="abs" style="left:315px;top:823px;width:1684px;height:1px;background:#dcdfe6"></div>
<div class="abs" style="left:315px;top:790.65px;font-size:15.8px;line-height:19.75px;font-weight:normal;white-space:nowrap;">Main</div>
<div class="abs" style="left:445px;top:790.26px;font-size:16.2px;line-height:20.25px;font-weight:normal;white-space:nowrap;">22.03.2025 17:38:31:570</div>
<div class="abs" style="left:714px;top:790.07px;font-size:16.4px;line-height:20.5px;font-weight:normal;white-space:nowrap;">Microsoft</div>
<div class="abs" style="left:900px;top:790.84px;font-size:15.6px;line-height:19.5px;font-weight:normal;white-space:nowrap;">Windows</div>
<div class="abs" style="left:1077px;top:790.55px;font-size:15.9px;line-height:19.88px;font-weight:normal;white-space:nowrap;">wd10.truecompany.local</div>
<div class="abs" style="left:1321.5px;top:790.16px;font-size:16.3px;line-height:20.38px;font-weight:normal;white-space:nowrap;">4703</div>
<div class="abs" style="left:1531px;top:790.84px;font-size:15.6px;line-height:19.5px;font-weight:normal;white-space:nowrap;">A token right was adjusted.</div>
<div class="abs" style="left:315px;top:868px;width:1684px;height:1px;background:#dcdfe6"></div>
<div class="abs" style="left:315px;top:835.65px;font-size:15.8px;line-height:19.75px;font-weight:normal;white-space:nowrap;">Main</div>
<div class="abs" style="left:445px;top:835.26px;font-size:16.2px;line-height:20.25px;font-weight:normal;white-space:nowrap;">22.03.2025 17:38:31:569</div>
<div class="abs" style="left:714px;top:835.07px;font-size:16.4px;line-height:20.5px;font-weight:normal;white-space:nowrap;">Microsoft</div>
<div class="abs" style="left:900px;top:835.84px;font-size:15.6px;line-height:19.5px;font-weight:normal;white-space:nowrap;">Windows</div>
<div class="abs" style="left:1077px;top:835.55px;font-size:15.9px;line-height:19.88px;font-weight:normal;white-space:nowrap;">srv-dc.truecompany.local</div>
<div class="abs" style="left:1321.5px;top:835.16px;font-size:16.3px;line-height:20.38px;font-weight:normal;white-space:nowrap;">5152</div>
<div class="abs" style="left:1531px;top:835.84px;font-size:15.6px;line-height:19.5px;font-weight:normal;white-space:nowrap;">The Windows Filtering Platform blocked a packet.</div>
<div class="abs" style="left:315px;top:913px;width:1684px;height:1px;background:#dcdfe6"></div>
<div class="abs" style="left:315px;top:880.65px;font-size:15.8px;line-height:19.75px;font-weight:normal;white-space:nowrap;">Main</div>
<div class="abs" style="left:445px;top:880.26px;font-size:16.2px;line-height:20.25px;font-weight:normal;white-space:nowrap;">22.03.2025 17:38:31:568</div>
<div class="abs" style="left:714px;top:880.07px;font-size:16.4px;line-height:20.5px;font-weight:normal;white-space:nowrap;">Microsoft</div>
<div class="abs" style="left:900px;top:880.84px;font-size:15.6px;line-height:19.5px;font-weight:normal;white-space:nowrap;">Windows</div>
<div class="abs" style="left:1077px;top:880.55px;font-size:15.9px;line-height:19.88px;font-weight:normal;white-space:nowrap;">srv-dc.truecompany.local</div>
<div class="abs" style="left:1321.5px;top:880.16px;font-size:16.3px;line-height:20.38px;font-weight:normal;white-space:nowrap;">5152</div>
<div class="abs" style="left:1531px;top:880.84px;font-size:15.6px;line-height:19.5px;font-weight:normal;white-space:nowrap;">The Windows Filtering Platform blocked a packet.</div>
<div class="abs" style="left:315px;top:958px;width:1684px;height:1px;background:#dcdfe6"></div>
<div class="abs" style="left:315px;top:925.65px;font-size:15.8px;line-height:19.75px;font-weight:normal;white-space:nowrap;">Main</div>
<div class="abs" style="left:445px;top:925.26px;font-size:16.2px;line-height:20.25px;font-weight:normal;white-space:nowrap;">22.03.2025 17:38:31:568</div>
<div class="abs" style="left:714px;top:925.07px;font-size:16.4px;line-height:20.5px;font-weight:normal;white-space:nowrap;">Microsoft</div>
<div class="abs" style="left:900px;top:925.84px;font-size:15.6px;line-height:19.5px;font-weight:normal;white-space:nowrap;">Windows</div>
<div class="abs" style="left:1077px;top:925.55px;font-size:15.9px;line-height:19.88px;font-weight:normal;white-space:nowrap;">srv-dc.truecompany.local</div>
<div class="abs" style="left:1321.5px;top:925.16px;font-size:16.3px;line-height:20.38px;font-weight:normal;white-space:nowrap;">5152</div>
<div class="abs" style="left:1531px;top:925.84px;font-size:15.6px;line-height:19.5px;font-weight:normal;white-space:nowrap;">The Windows Filtering Platform blocked a packet.</div>
<div class="badge" style="left:998.8px;top:516.7px;width:29.4px;height:29.4px;line-height:29.4px;font-weight:normal;font-size:16.5px">2</div>
<div class="abs" style="left:2011px;top:284px;width:1px;height:675px;background:#e3e3e3"></div>
<div class="abs" style="left:1999px;top:329px;width:12px;height:630px;background:linear-gradient(to right,#ffffff,#f4f4f4 60%,#e6e6e6)"></div>
<svg class="abs" style="left:2000px;top:332px" width="11" height="8"><path d="M1 7 L5.3 1 L9.6 7 Z" fill="#808080" stroke="#808080" stroke-width="0.8" stroke-linejoin="round"/></svg>
<div class="abs" style="left:2002px;top:736px;width:7px;height:77px;background:#858585;border-radius:4px"></div>
</body></html>
